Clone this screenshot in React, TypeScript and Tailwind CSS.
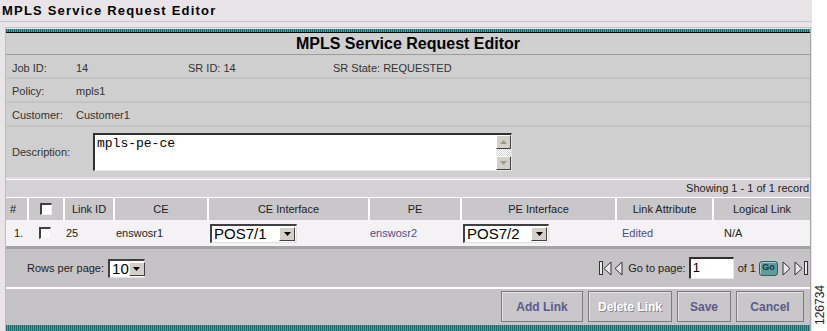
import React from 'react';

const font = "font-['Liberation_Sans',Arial,sans-serif]";

const Teal = ({ h }: { h: string }) => (
  <div className={`${h} bg-[repeating-linear-gradient(90deg,#1e6b6b_0_1px,#4f9c9c_1px_2px)]`} />
);

const DropArrow = () => (
  <div className="w-[16px] h-full bg-[#d4d0c8] border border-t-white border-l-white border-r-[#404040] border-b-[#404040] flex items-center justify-center">
    <svg width="7" height="4" viewBox="0 0 7 4"><path d="M0 0h7L3.5 4z" fill="#000" /></svg>
  </div>
);

const Select = ({ value, w, text }: { value: string; w: string; text: string }) => (
  <div className={`${w} h-[19px] bg-white flex border-t-2 border-l-2 border-t-[#404040] border-l-[#404040] border-b border-r border-b-[#e0e0e0] border-r-[#e0e0e0]`}>
    <div className={`flex-1 pl-[2px] leading-[16px] ${text} text-black`}>{value}</div>
    <div className="py-[1px] pr-[1px]"><DropArrow /></div>
  </div>
);

const Checkbox = () => (
  <div className="w-[12px] h-[12px] bg-white border-t-2 border-l-2 border-t-[#404040] border-l-[#404040] border-b border-r border-b-[#f0f0f0] border-r-[#f0f0f0]" />
);

const Tri = ({ dir }: { dir: 'l' | 'r' }) => (
  <svg width="9" height="15" viewBox="0 0 9 15">
    {dir === 'l' ? (
      <path d="M8 1L1 7.5 8 14z" fill="#e8e8e8" stroke="#333" strokeWidth="1" />
    ) : (
      <path d="M1 1l7 6.5L1 14z" fill="#e8e8e8" stroke="#333" strokeWidth="1" />
    )}
  </svg>
);

const Bar = () => <div className="w-[4px] h-[14px] border border-[#333] bg-[#e8e8e8]" />;

const cols = 'grid grid-cols-[21px_36px_50px_94px_161px_92px_155px_97px_98px]';

const Btn = ({ label, w, disabled }: { label: string; w: string; disabled?: boolean }) => (
  <div
    className={`${w} h-[31px] bg-[#c9c7c9] border border-[#7d7b7d] shadow-[inset_1px_1px_0_#e4e2e4] flex items-center justify-center text-[12px] font-bold ${
      disabled ? 'text-white [text-shadow:1px_1px_0_#8a888a]' : 'text-[#5a5a8e]'
    }`}
  >
    {label}
  </div>
);

export default function App() {
  return (
    <div className={`w-[827px] h-[331px] overflow-hidden flex bg-white text-[#222] ${font}`}>
      {/* main column */}
      <div className="w-[812px] h-full bg-[#e8e4e7] flex flex-col">
        <div className="h-[22px] border-b border-[#c9c5c9] pl-[2px] pt-[2px] text-[13px] font-bold tracking-[1.2px] text-black leading-[17px]">
          MPLS Service Request Editor
        </div>

        <div className="pl-[5px] pt-[5px] flex-1">
          <div className="w-[806px] h-[304px] flex flex-col border-l border-r border-t border-l-[#bdbbbd] border-r-[#a9a7a9] border-t-[#c4c2c4] bg-[#cfcfcf]">
            <div className="h-[1px] bg-[#e4e4e4]" />
            <Teal h="h-[3px]" />
            <div className="h-[1px] bg-black" />

            {/* title band */}
            <div className="h-[22px] bg-[#d0d0d0] border-b border-[#9d9d9d] flex items-center justify-center pt-[1px] text-[16px] font-bold text-black">
              MPLS Service Request Editor
            </div>

            {/* info rows */}
            <div className="h-[24px] border-b-2 border-[#c3c3c3] flex items-center pt-[4px] text-[11px] text-[#333]">
              <span className="pl-[6px] w-[70px]">Job ID:</span>
              <span className="w-[112px]">14</span>
              <span className="w-[145px]">SR ID: 14</span>
              <span>SR State: REQUESTED</span>
            </div>
            <div className="h-[24px] border-b-2 border-[#c3c3c3] flex items-center pt-[3px] text-[11px] text-[#333]">
              <span className="pl-[6px] w-[70px]">Policy:</span>
              <span>mpls1</span>
            </div>
            <div className="h-[24px] border-b-2 border-[#c3c3c3] flex items-center pt-[2px] text-[11px] text-[#333]">
              <span className="pl-[6px] w-[70px]">Customer:</span>
              <span>Customer1</span>
            </div>
            <div className="h-[50px] flex items-center text-[11px] text-[#333]">
              <span className="pl-[6px] w-[87px]">Description:</span>
              <div className="w-[419px] h-[38px] bg-white flex border-t-2 border-l-2 border-t-[#303030] border-l-[#303030] border-b border-r border-b-[#e8e8e8] border-r-[#e8e8e8]">
                <div className="flex-1 pl-[2px] pt-[1px] text-[13px] leading-[15px] text-black font-['Liberation_Mono','Courier_New',monospace]">
                  mpls-pe-ce
                </div>
                <div className="w-[15px] flex flex-col bg-[repeating-conic-gradient(#d8d8d8_0_25%,#ffffff_0_50%)] bg-[length:2px_2px]">
                  <div className="h-[14px] bg-[#d4d0c8] border border-t-white border-l-white border-r-[#404040] border-b-[#404040] flex items-center justify-center">
                    <svg width="7" height="4" viewBox="0 0 7 4"><path d="M3.5 0L7 4H0z" fill="#999" /></svg>
                  </div>
                  <div className="flex-1" />
                  <div className="h-[14px] bg-[#d4d0c8] border border-t-white border-l-white border-r-[#404040] border-b-[#404040] flex items-center justify-center">
                    <svg width="7" height="4" viewBox="0 0 7 4"><path d="M0 0h7L3.5 4z" fill="#999" /></svg>
                  </div>
                </div>
              </div>
            </div>
            <div className="h-[2px] bg-[#dedcde]" />

            {/* table */}
            <div className="h-[18px] bg-[#d3d1d3] border-t border-white flex items-center justify-end pr-[1px] text-[11px] text-[#222]">
              Showing 1 - 1 of 1 record
            </div>
            <div className={`${cols} h-[23px] bg-[#c9c7c9] border-t border-white text-[11px] text-[#222]`}>
              <div className="flex items-center pl-[4px]">#</div>
              {[null, 'Link ID', 'CE', 'CE Interface', 'PE', 'PE Interface', 'Link Attribute', 'Logical Link'].map((h, i) => (
                <div key={i} className="border-l-2 border-white flex items-center justify-center">
                  {h === null ? <Checkbox /> : h}
                </div>
              ))}
            </div>
            <div className={`${cols} h-[26px] bg-[#f4f2f4] text-[11px] text-[#222] items-center`}>
              <div className="pl-[8px]">1.</div>
              <div className="flex justify-center"><Checkbox /></div>
              <div className="pl-[3px]">25</div>
              <div className="pl-[3px]">enswosr1</div>
              <div className="pl-[3px]"><Select value="POS7/1" w="w-[87px]" text="text-[15px]" /></div>
              <div className="pl-[2px] text-[#4c4c8e]">enswosr2</div>
              <div className="pl-[3px]"><Select value="POS7/2" w="w-[86px]" text="text-[15px]" /></div>
              <div className="pl-[7px] text-[#4c4c8e]">Edited</div>
              <div className="pl-[12px]">N/A</div>
            </div>
            <div className="h-[3px] bg-[#a4a2a4]" />

            {/* footer */}
            <div className="h-[38px] bg-[#c5c3c5] flex items-center justify-between pl-[21px] pr-[2px] text-[11px] text-[#222]">
              <div className="flex items-center gap-[4px]">
                <span>Rows per page:</span>
                <Select value="10" w="w-[37px]" text="text-[15px]" />
              </div>
              <div className="flex items-center">
                <Bar />
                <Tri dir="l" />
                <div className="w-[2px]" />
                <Tri dir="l" />
                <span className="ml-[5px] mr-[3px]">Go to page:</span>
                <div className="w-[45px] h-[22px] bg-white border-t-2 border-l-2 border-t-[#303030] border-l-[#303030] border-b border-r border-b-[#e8e8e8] border-r-[#e8e8e8] pl-[2px] text-[13px] leading-[18px] text-black">
                  1
                </div>
                <span className="ml-[4px]">of 1</span>
                <div className="ml-[3px] w-[19px] h-[15px] rounded-[3px] bg-[#5f9c9a] border border-[#2f6060] shadow-[inset_1px_1px_0_#a6d0ce] flex items-center justify-center text-[9px] font-bold text-[#17324e]">
                  Go
                </div>
                <div className="w-[4px]" />
                <Tri dir="r" />
                <div className="w-[3px]" />
                <Tri dir="r" />
                <div className="w-[1px]" />
                <Bar />
              </div>
            </div>
            <div className="h-[2px] bg-white" />
            <div className="flex-1 bg-[#c5c3c5] flex items-center justify-end gap-[5px] pr-[6px] pb-[1px]">
              <Btn label="Add Link" w="w-[82px]" />
              <Btn label="Delete Link" w="w-[84px]" disabled />
              <Btn label="Save" w="w-[54px]" />
              <Btn label="Cancel" w="w-[68px]" />
            </div>
            <Teal h="h-[6px]" />
          </div>
        </div>
      </div>

      {/* figure number strip */}
      <div className="flex-1 flex flex-col justify-end items-center pb-[6px]">
        <div className="[writing-mode:vertical-rl] rotate-180 text-[12px] text-[#222] leading-[14px]">126734</div>
      </div>
    </div>
  );
}
